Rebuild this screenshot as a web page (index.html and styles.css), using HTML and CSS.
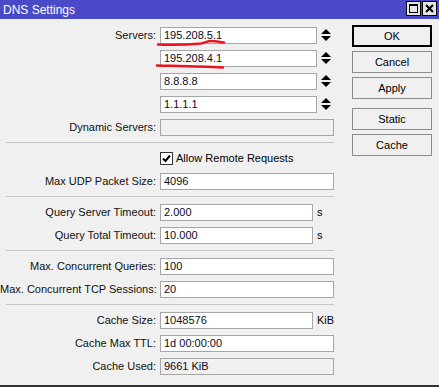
FILE: index.html
```html
<!DOCTYPE html>
<html lang="en">
<head>
  <meta charset="UTF-8">
  <title>DNS Settings</title>
  <link rel="stylesheet" href="styles.css">
</head>
<body>
  <div class="window">
    <div class="titlebar">
      <span class="title">DNS Settings</span>
      <div class="winbtns">
        <span class="wbtn"><span class="maxbox"></span></span>
        <span class="wbtn">
          <svg width="9" height="9" viewBox="0 0 9 9"><path d="M1 1L8 8M8 1L1 8" stroke="#000" stroke-width="2"/></svg>
        </span>
      </div>
    </div>

    <div class="content">
      <div class="form">
        <div class="row">
          <label>Servers:</label>
          <div class="field"><div class="input spin">195.208.5.1</div><span class="spinner"></span></div>
        </div>
        <div class="row">
          <label></label>
          <div class="field"><div class="input spin">195.208.4.1</div><span class="spinner"></span></div>
        </div>
        <div class="row">
          <label></label>
          <div class="field"><div class="input spin">8.8.8.8</div><span class="spinner"></span></div>
        </div>
        <div class="row">
          <label></label>
          <div class="field"><div class="input spin">1.1.1.1</div><span class="spinner"></span></div>
        </div>
        <div class="row">
          <label>Dynamic Servers:</label>
          <div class="field"><div class="input full disabled"></div></div>
        </div>

        <hr class="sep">

        <div class="row">
          <label></label>
          <div class="field check">
            <span class="checkbox">
              <svg width="9" height="9" viewBox="0 0 9 9"><path d="M1 4.5L3.5 7L8 1.5" fill="none" stroke="#000" stroke-width="2"/></svg>
            </span>
            <span>Allow Remote Requests</span>
          </div>
        </div>
        <div class="row">
          <label>Max UDP Packet Size:</label>
          <div class="field"><div class="input full">4096</div></div>
        </div>

        <hr class="sep">

        <div class="row">
          <label>Query Server Timeout:</label>
          <div class="field"><div class="input short">2.000</div><span class="unit">s</span></div>
        </div>
        <div class="row">
          <label>Query Total Timeout:</label>
          <div class="field"><div class="input short">10.000</div><span class="unit">s</span></div>
        </div>

        <hr class="sep">

        <div class="row">
          <label>Max. Concurrent Queries:</label>
          <div class="field"><div class="input full">100</div></div>
        </div>
        <div class="row">
          <label>Max. Concurrent TCP Sessions:</label>
          <div class="field"><div class="input full">20</div></div>
        </div>

        <hr class="sep">

        <div class="row">
          <label>Cache Size:</label>
          <div class="field"><div class="input short">1048576</div><span class="unit">KiB</span></div>
        </div>
        <div class="row">
          <label>Cache Max TTL:</label>
          <div class="field"><div class="input full">1d 00:00:00</div></div>
        </div>
        <div class="row">
          <label>Cache Used:</label>
          <div class="field"><div class="input full disabled">9661 KiB</div></div>
        </div>
      </div>

      <div class="buttons">
        <button class="default">OK</button>
        <button>Cancel</button>
        <button>Apply</button>
        <button class="gap">Static</button>
        <button>Cache</button>
      </div>
    </div>

    <!-- hand-drawn red marks over the first two servers -->
    <svg class="marks" width="439" height="387" viewBox="0 0 439 387">
      <path d="M158 44.5C172 45 190 44.5 201 43.5C206 42.5 207 41 211 41C216 41 220 42 224 42.5" fill="none" stroke="#e8141e" stroke-width="2.5" stroke-linecap="round"/>
      <path d="M157 65.5C175 66 200 66.5 223 67.5" fill="none" stroke="#e8141e" stroke-width="2.5" stroke-linecap="round"/>
    </svg>
  </div>
</body>
</html>
```

FILE: styles.css
```css
* { box-sizing: border-box; }
body {
  margin: 0;
  font-family: 'Liberation Sans', Arial, sans-serif;
  font-size: 11px;
  color: #000;
  background: #f0f0f0;
}
.window {
  position: relative;
  width: 439px;
  height: 387px;
  background: #f0f0f0;
  border-bottom: 2px solid #333;
  overflow: hidden;
}
.titlebar {
  height: 19px;
  background: #4a4ac8;
  display: flex;
  align-items: center;
  justify-content: space-between;
  padding: 0 2px 0 3px;
}
.title { color: #fff; font-size: 12px; }
.winbtns { display: flex; gap: 1px; align-self: flex-start; padding-top: 1px; }
.wbtn {
  width: 15px; height: 15px;
  background: #e6e6e6;
  border: 1px solid #000;
  display: flex; align-items: center; justify-content: center;
}
.maxbox { width: 9px; height: 9px; border: 1px solid #000; border-top-width: 2px; }

.content { display: flex; padding-top: 6px; }
.form { width: 334px; padding-top: 1px; display: flex; flex-direction: column; gap: 5px; }
.row {
  display: grid;
  grid-template-columns: 156px 174px;
  column-gap: 4px;
  height: 18px;
  align-items: center;
}
.row label { text-align: right; color: #111; white-space: nowrap; }
.field { display: flex; align-items: center; height: 18px; }
.input {
  height: 17px;
  background: #fff;
  border: 1px solid #a6a6a6;
  padding: 0 3px;
  line-height: 15px;
  color: #0a0a1e;
  white-space: nowrap;
}
.input.full { width: 174px; }
.input.spin { width: 157px; }
.input.short { width: 153px; }
.input.disabled { background: #f0f0f0; }
.unit { margin-left: 4px; }
.spinner {
  width: 17px; height: 17px;
  display: flex; flex-direction: column; align-items: center; justify-content: center; gap: 2px;
}
.spinner::before, .spinner::after {
  content: '';
  width: 0; height: 0;
  border-left: 5px solid transparent;
  border-right: 5px solid transparent;
}
.spinner::before { border-bottom: 5px solid #000; }
.spinner::after { border-top: 5px solid #000; }

.check { gap: 3px; }
.checkbox {
  width: 13px; height: 13px;
  background: #fff;
  border: 1px solid #333;
  display: flex; align-items: center; justify-content: center;
}
.sep {
  margin: 1px 0 1px 6px;
  border: 0;
  height: 1px;
  background: #c6c6c6;
}

.buttons { margin-left: 18px; display: flex; flex-direction: column; gap: 4px; }
.buttons button {
  width: 80px; height: 22px;
  font-family: inherit; font-size: 11px;
  background: #f0f0f0;
  border: 1px solid #8c8c8c;
  padding: 0;
  color: #000;
}
.buttons button.default { border: 2px solid #000; }
.buttons button.gap { margin-top: 5px; }

.marks { position: absolute; left: 0; top: 0; pointer-events: none; }
```
